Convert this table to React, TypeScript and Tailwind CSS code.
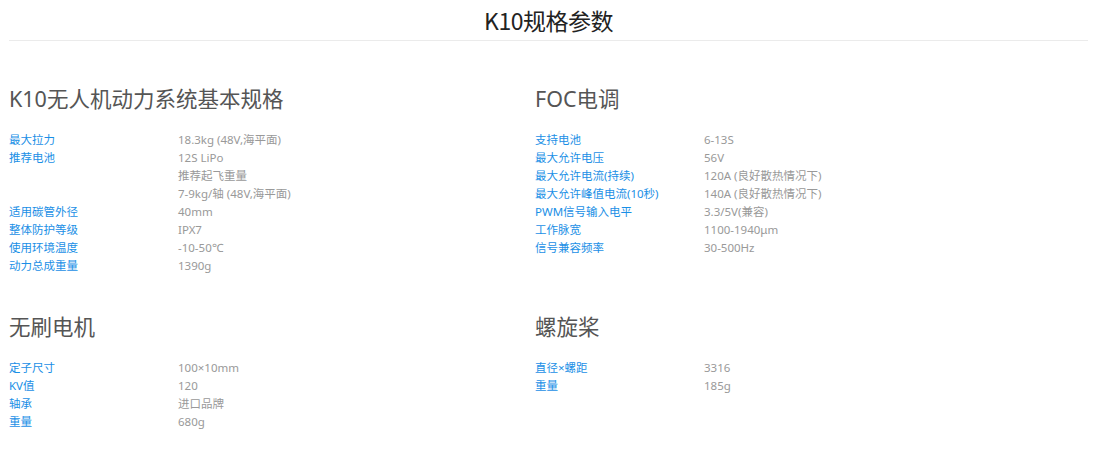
import React from 'react';

type Row = [string, string];

const sections: { title: string; rows: Row[] }[] = [
  {
    title: 'K10无人机动力系统基本规格',
    rows: [
      ['最大拉力', '18.3kg (48V,海平面)'],
      ['推荐电池', '12S LiPo'],
      ['', '推荐起飞重量'],
      ['', '7-9kg/轴 (48V,海平面)'],
      ['适用碳管外径', '40mm'],
      ['整体防护等级', 'IPX7'],
      ['使用环境温度', '-10-50℃'],
      ['动力总成重量', '1390g'],
    ],
  },
  {
    title: 'FOC电调',
    rows: [
      ['支持电池', '6-13S'],
      ['最大允许电压', '56V'],
      ['最大允许电流(持续)', '120A (良好散热情况下)'],
      ['最大允许峰值电流(10秒)', '140A (良好散热情况下)'],
      ['PWM信号输入电平', '3.3/5V(兼容)'],
      ['工作脉宽', '1100-1940μm'],
      ['信号兼容频率', '30-500Hz'],
    ],
  },
  {
    title: '无刷电机',
    rows: [
      ['定子尺寸', '100×10mm'],
      ['KV值', '120'],
      ['轴承', '进口品牌'],
      ['重量', '680g'],
    ],
  },
  {
    title: '螺旋桨',
    rows: [
      ['直径×螺距', '3316'],
      ['重量', '185g'],
    ],
  },
];

function SpecBlock({ title, rows }: { title: string; rows: Row[] }) {
  return (
    <div>
      <h2 className="text-[21.5px] leading-[28px] text-[#555] mb-[18px]">{title}</h2>
      <div className="flex flex-col">
        {rows.map(([k, v], i) => (
          <div key={i} className="flex text-[11.5px] leading-[18px]">
            <span className="w-[169px] shrink-0 text-[#1a8fe6]">{k}</span>
            <span className="text-[#999]">{v}</span>
          </div>
        ))}
      </div>
    </div>
  );
}

export default function App() {
  return (
    <div
      className="w-[1119px] h-[463px] bg-white pl-[9px] pr-[31px]"
      style={{ fontFamily: '"Noto Sans", "Noto Sans CJK SC", sans-serif' }}
    >
      <div className="border-b border-[#ebebeb] h-[41px] flex items-center justify-center">
        <h1 className="text-[23px] text-[#222] tracking-[-0.5px]" style={{ fontFamily: '"Noto Sans CJK SC", sans-serif' }}>
          K10规格参数
        </h1>
      </div>
      <div className="grid grid-cols-[526px_1fr] gap-y-[38px] pt-[44px]">
        {sections.map((s) => (
          <SpecBlock key={s.title} title={s.title} rows={s.rows} />
        ))}
      </div>
    </div>
  );
}
